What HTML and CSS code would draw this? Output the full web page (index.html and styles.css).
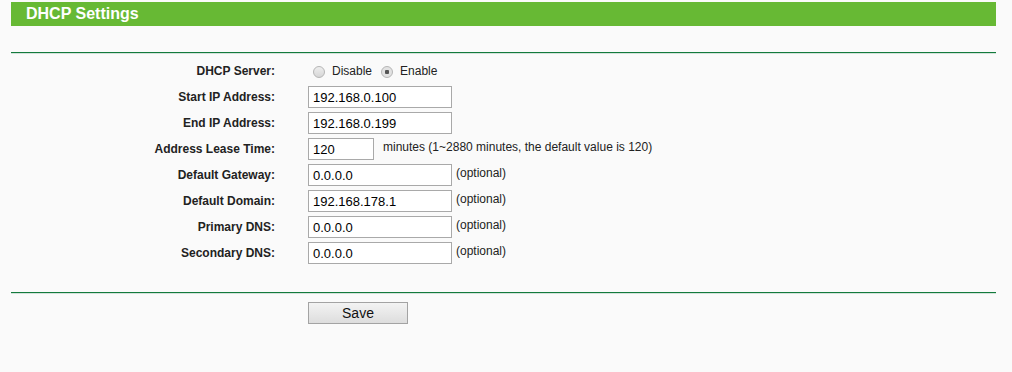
FILE: index.html
```html
<!DOCTYPE html>
<html lang="en">
  <head>
    <title>DHCP Settings</title>
    <meta charset="utf-8" />
    <link rel="stylesheet" href="styles.css">
  </head>
  <body>
    <div id="container">
      <h2 class="title">DHCP Settings</h2>
      <div class="rule"></div>

      <div class="form">
        <label>DHCP Server:</label>
        <div class="field radios">
          <input type="radio" name="dhcp" id="off" />
          <span class="opt">Disable</span>
          <input type="radio" name="dhcp" id="on" checked />
          <span class="opt">Enable</span>
        </div>

        <label for="start">Start IP Address:</label>
        <div class="field"><input type="text" id="start" value="192.168.0.100" /></div>

        <label for="end">End IP Address:</label>
        <div class="field"><input type="text" id="end" value="192.168.0.199" /></div>

        <label for="lease">Address Lease Time:</label>
        <div class="field">
          <input class="short" type="text" id="lease" value="120" />
          <span class="note wide">minutes (1~2880 minutes, the default value is 120)</span>
        </div>

        <label for="gw">Default Gateway:</label>
        <div class="field">
          <input type="text" id="gw" value="0.0.0.0" />
          <span class="note">(optional)</span>
        </div>

        <label for="domain">Default Domain:</label>
        <div class="field">
          <input type="text" id="domain" value="192.168.178.1" />
          <span class="note">(optional)</span>
        </div>

        <label for="dns1">Primary DNS:</label>
        <div class="field">
          <input type="text" id="dns1" value="0.0.0.0" />
          <span class="note">(optional)</span>
        </div>

        <label for="dns2">Secondary DNS:</label>
        <div class="field">
          <input type="text" id="dns2" value="0.0.0.0" />
          <span class="note">(optional)</span>
        </div>
      </div>

      <div class="rule bottom"></div>
      <div class="actions">
        <button>Save</button>
      </div>
    </div>
  </body>
</html>
```
FILE: styles.css
```css
body {
  margin: 0;
  background-color: #fafafa;
  font-family: "Liberation Sans", Arial, sans-serif;
  font-size: 12px;
  color: #222;
}
#container {
  width: 985px;
  margin-left: 11px;
  padding-top: 2px;
}

.title {
  margin: 0;
  height: 24px;
  line-height: 24px;
  padding-left: 15px;
  background-color: #67b934;
  color: #fff;
  font-size: 16px;
  font-weight: bold;
}

.rule {
  margin-top: 26px;
  height: 1px;
  background-color: #137a3c;
  box-shadow: 0 1px 0 #d2e2da;
}
.rule.bottom {
  margin-top: 28px;
}

.form {
  display: grid;
  grid-template-columns: 264px auto;
  grid-auto-rows: 22px;
  column-gap: 33px;
  row-gap: 4px;
  margin-top: 7px;
}
.form label {
  align-self: center;
  text-align: right;
  font-weight: bold;
  color: #222;
}

.field {
  display: flex;
  align-items: flex-start;
}
.field input[type="text"] {
  box-sizing: border-box;
  width: 144px;
  height: 22px;
  margin: 0;
  padding: 0 4px;
  border: 1px solid #a9a9a9;
  background-color: #fff;
  font-family: "Liberation Sans", Arial, sans-serif;
  font-size: 13px;
  color: #000;
  outline: none;
}
.field input.short {
  width: 66px;
}
.note {
  margin-left: 4px;
  line-height: 14px;
  padding-top: 2px;
}
.note.wide {
  margin-left: 9px;
}

.radios {
  align-items: center;
}
.radios input {
  appearance: none;
  box-sizing: border-box;
  width: 12px;
  height: 12px;
  margin: 1px 7px 0 5px; /* nudged to sit with the text */
  border: 1px solid #b5b5b5;
  border-radius: 50%;
  background: linear-gradient(#eee, #d6d6d6);
}
.radios input:checked {
  background: radial-gradient(circle, #555 0 2px, #e2e2e2 2.5px);
}
.radios #on {
  margin-left: 9px;
}
.opt {
  color: #222;
}

.actions {
  padding-left: 297px; /* lines the button up with the inputs */
  margin-top: 9px;
}
button {
  width: 100px;
  height: 22px;
  padding: 0;
  border: 1px solid #a3a3a3;
  background: linear-gradient(#f3f3f3, #dddddd);
  font-family: "Liberation Sans", Arial, sans-serif;
  font-size: 14px;
  color: #111;
}
```
